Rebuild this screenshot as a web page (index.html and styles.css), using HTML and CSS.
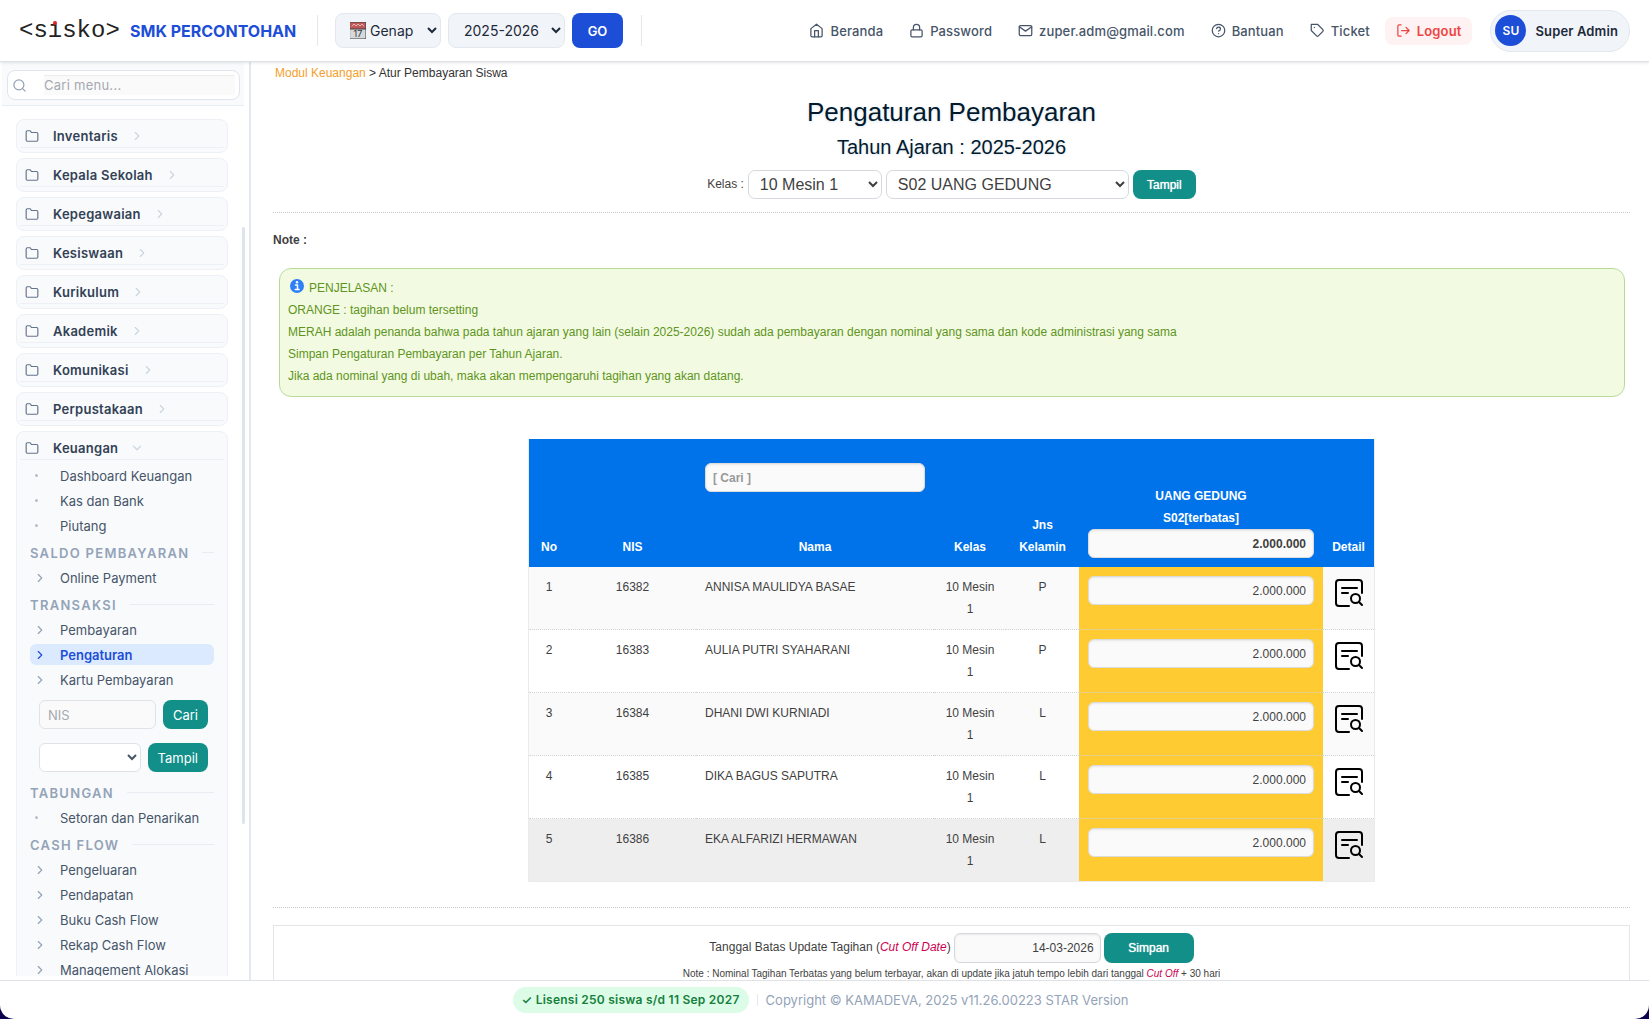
FILE: index.html
```html
<!DOCTYPE html>
<html lang="id">
<head>
<meta charset="utf-8">
<title>Pengaturan Pembayaran - SISKO</title>
<link rel="stylesheet" href="styles.css">
</head>
<body>
<svg class="defs" aria-hidden="true">
  <symbol id="folder" viewBox="0 0 24 24"><path d="M22 19a2 2 0 0 1-2 2H4a2 2 0 0 1-2-2V5a2 2 0 0 1 2-2h5l2 3h9a2 2 0 0 1 2 2z"/></symbol>
  <symbol id="chevron" viewBox="0 0 24 24"><path d="M9 18l6-6-6-6"/></symbol>
  <symbol id="detail" viewBox="0 0 28 28"><path d="M14 27H4a3 3 0 0 1-3-3V4a3 3 0 0 1 3-3h20a3 3 0 0 1 3 3v10M7 9h15M7 14h6M24 23l3 3"/><circle cx="20.500" cy="19.500" r="4.500"/></symbol>
</svg>

<header class="topbar">
  <a class="brand" href="#"><span class="logo">&lt;s<span class="logo-i">ı<i class="logo-dot"></i></span>sko&gt;</span><span class="school">SMK PERCONTOHAN</span></a>
  <form class="period">
    <span class="semester">
      <select aria-label="Semester" class="top-select sem-select"><option>Genap</option></select>
      <svg class="calendar" viewBox="0 0 16 17" aria-hidden="true"><rect width="16" height="17" fill="#d6d9dc"/><rect width="16" height="7" fill="#bd5a58"/><path d="M2 4l2-2 2 2 2-2 2 2 2-2 2 2" stroke="#e8b4b2" fill="none"/><text x="8" y="15" text-anchor="middle" class="cal-day">17</text></svg>
    </span>
    <select aria-label="Tahun ajaran" class="top-select year-select"><option>2025-2026</option></select>
    <button type="button" class="go">GO</button>
  </form>
  <nav class="topnav">
    <a href="#"><svg class="ico" viewBox="0 0 24 24"><path d="M3 9l9-7 9 7v11a2 2 0 0 1-2 2H5a2 2 0 0 1-2-2z"/><path d="M9 22V12h6v10"/></svg>Beranda</a>
    <a href="#"><svg class="ico" viewBox="0 0 24 24"><rect x="3" y="11" width="18" height="11" rx="2"/><path d="M7 11V7a5 5 0 0 1 10 0v4"/></svg>Password</a>
    <a href="#"><svg class="ico" viewBox="0 0 24 24"><rect x="2" y="4" width="20" height="16" rx="2"/><path d="M22 6l-10 7L2 6"/></svg>zuper.adm@gmail.com</a>
    <a href="#"><svg class="ico" viewBox="0 0 24 24"><circle cx="12" cy="12" r="10"/><path d="M9 9a3 3 0 0 1 6 1c0 2-3 3-3 3M12 17h.01"/></svg>Bantuan</a>
    <a href="#"><svg class="ico" viewBox="0 0 24 24"><path d="M20.600 13.400l-7.200 7.200a2 2 0 0 1-2.800 0L2 12V2h10l8.600 8.600a2 2 0 0 1 0 2.800zM7 7h.01"/></svg>Ticket</a>
    <a href="#" class="logout"><svg class="ico" viewBox="0 0 24 24"><path d="M8 21H5a2 2 0 0 1-2-2V5a2 2 0 0 1 2-2h3M16 17l5-5-5-5M21 12H9"/></svg>Logout</a>
    <a href="#" class="user"><span class="avatar">SU</span>Super Admin</a>
  </nav>
</header>

<div class="body">
  <aside class="sidebar">
    <div class="search-area">
      <div class="search"><svg class="ico" viewBox="0 0 24 24"><circle cx="11" cy="11" r="8"/><path d="M21 21l-4-4"/></svg><input aria-label="Cari menu" type="text" placeholder="Cari menu..."></div>
    </div>
    <div class="menu">
      <section class="card"><button type="button" class="card-head"><svg class="fold"><use href="#folder"/></svg>Inventaris<svg class="chev"><use href="#chevron"/></svg></button></section>
      <section class="card"><button type="button" class="card-head"><svg class="fold"><use href="#folder"/></svg>Kepala Sekolah<svg class="chev"><use href="#chevron"/></svg></button></section>
      <section class="card"><button type="button" class="card-head"><svg class="fold"><use href="#folder"/></svg>Kepegawaian<svg class="chev"><use href="#chevron"/></svg></button></section>
      <section class="card"><button type="button" class="card-head"><svg class="fold"><use href="#folder"/></svg>Kesiswaan<svg class="chev"><use href="#chevron"/></svg></button></section>
      <section class="card"><button type="button" class="card-head"><svg class="fold"><use href="#folder"/></svg>Kurikulum<svg class="chev"><use href="#chevron"/></svg></button></section>
      <section class="card"><button type="button" class="card-head"><svg class="fold"><use href="#folder"/></svg>Akademik<svg class="chev"><use href="#chevron"/></svg></button></section>
      <section class="card"><button type="button" class="card-head"><svg class="fold"><use href="#folder"/></svg>Komunikasi<svg class="chev"><use href="#chevron"/></svg></button></section>
      <section class="card"><button type="button" class="card-head"><svg class="fold"><use href="#folder"/></svg>Perpustakaan<svg class="chev"><use href="#chevron"/></svg></button></section>
      <section class="card open"><button type="button" class="card-head"><svg class="fold"><use href="#folder"/></svg>Keuangan<svg class="chev"><use href="#chevron"/></svg></button>
        <div class="submenu">
          <a href="#" class="dot">Dashboard Keuangan</a>
          <a href="#" class="dot">Kas dan Bank</a>
          <a href="#" class="dot">Piutang</a>
          <h3>SALDO PEMBAYARAN</h3>
          <a href="#"><svg><use href="#chevron"/></svg>Online Payment</a>
          <h3>TRANSAKSI</h3>
          <a href="#"><svg><use href="#chevron"/></svg>Pembayaran</a>
          <a href="#" class="active"><svg><use href="#chevron"/></svg>Pengaturan</a>
          <a href="#"><svg><use href="#chevron"/></svg>Kartu Pembayaran</a>
          <div class="quick">
            <form class="mini"><input type="text" aria-label="NIS" placeholder="NIS"><button type="button" class="teal">Cari</button></form>
            <form class="mini"><select aria-label="Kelas"><option></option></select><button type="button" class="teal">Tampil</button></form>
          </div>
          <h3>TABUNGAN</h3>
          <a href="#" class="dot">Setoran dan Penarikan</a>
          <h3>CASH FLOW</h3>
          <a href="#"><svg><use href="#chevron"/></svg>Pengeluaran</a>
          <a href="#"><svg><use href="#chevron"/></svg>Pendapatan</a>
          <a href="#"><svg><use href="#chevron"/></svg>Buku Cash Flow</a>
          <a href="#"><svg><use href="#chevron"/></svg>Rekap Cash Flow</a>
          <a href="#"><svg><use href="#chevron"/></svg>Management Alokasi</a>
        </div>
      </section>
    </div>
    <div class="thumb"></div>
  </aside>

  <main class="main">
    <div class="crumbs"><a href="#">Modul Keuangan</a> &gt; Atur Pembayaran Siswa</div>
    <h1>Pengaturan Pembayaran</h1>
    <h2>Tahun Ajaran : 2025-2026</h2>
    <form class="filter">
      <label for="kelas">Kelas :</label>
      <select id="kelas" class="kelas"><option>10 Mesin 1</option></select>
      <select aria-label="Jenis pembayaran" class="jenis"><option>S02 UANG GEDUNG</option></select>
      <button type="button" class="teal">Tampil</button>
    </form>
    <hr>
    <p class="note-title">Note :</p>
    <div class="info">
      <p><svg class="info-ico" viewBox="0 0 14 14" aria-hidden="true"><circle cx="7" cy="7" r="7" fill="#2f80f5"/><path d="M5.500 6H7.500v4.500M5.300 10.500h3.800" stroke="#fff" stroke-width="1.500" fill="none"/><circle cx="7" cy="3.300" r="1.200" fill="#fff"/></svg>PENJELASAN :</p>
      <p>ORANGE : tagihan belum tersetting</p>
      <p>MERAH adalah penanda bahwa pada tahun ajaran yang lain (selain 2025-2026) sudah ada pembayaran dengan nominal yang sama dan kode administrasi yang sama</p>
      <p>Simpan Pengaturan Pembayaran per Tahun Ajaran.</p>
      <p>Jika ada nominal yang di ubah, maka akan mempengaruhi tagihan yang akan datang.</p>
    </div>
    <table class="bills">
      <colgroup><col class="c-no"><col class="c-nis"><col class="c-nama"><col class="c-kelas"><col class="c-jk"><col class="c-uang"><col class="c-detail"></colgroup>
      <thead><tr>
        <th>No</th><th>NIS</th>
        <th><input class="cari" type="text" aria-label="Cari nama" placeholder="[ Cari ]">Nama</th>
        <th>Kelas</th><th>Jns Kelamin</th>
        <th>UANG GEDUNG<br>S02[terbatas]<input type="text" aria-label="Nominal semua" value="2.000.000"></th>
        <th>Detail</th>
      </tr></thead>
      <tbody>
        <tr><td>1</td><td>16382</td><td class="name">ANNISA MAULIDYA BASAE</td><td>10 Mesin 1</td><td>P</td><td class="amount"><input type="text" aria-label="Nominal 16382" value="2.000.000"></td><td class="act"><a href="#" aria-label="Detail 16382"><svg><use href="#detail"/></svg></a></td></tr>
        <tr><td>2</td><td>16383</td><td class="name">AULIA PUTRI SYAHARANI</td><td>10 Mesin 1</td><td>P</td><td class="amount"><input type="text" aria-label="Nominal 16383" value="2.000.000"></td><td class="act"><a href="#" aria-label="Detail 16383"><svg><use href="#detail"/></svg></a></td></tr>
        <tr><td>3</td><td>16384</td><td class="name">DHANI DWI KURNIADI</td><td>10 Mesin 1</td><td>L</td><td class="amount"><input type="text" aria-label="Nominal 16384" value="2.000.000"></td><td class="act"><a href="#" aria-label="Detail 16384"><svg><use href="#detail"/></svg></a></td></tr>
        <tr><td>4</td><td>16385</td><td class="name">DIKA BAGUS SAPUTRA</td><td>10 Mesin 1</td><td>L</td><td class="amount"><input type="text" aria-label="Nominal 16385" value="2.000.000"></td><td class="act"><a href="#" aria-label="Detail 16385"><svg><use href="#detail"/></svg></a></td></tr>
        <tr class="hover"><td>5</td><td>16386</td><td class="name">EKA ALFARIZI HERMAWAN</td><td>10 Mesin 1</td><td>L</td><td class="amount"><input type="text" aria-label="Nominal 16386" value="2.000.000"></td><td class="act"><a href="#" aria-label="Detail 16386"><svg><use href="#detail"/></svg></a></td></tr>
      </tbody>
    </table>
    <hr>
    <form class="cutoff">
      <div class="cutoff-row"><label for="cutoff">Tanggal Batas Update Tagihan (<em>Cut Off Date</em>)</label><input id="cutoff" type="text" value="14-03-2026"><button type="button" class="teal">Simpan</button></div>
      <p>Note : Nominal Tagihan Terbatas yang belum terbayar, akan di update jika jatuh tempo lebih dari tanggal <em>Cut Off</em> + 30 hari</p>
    </form>
  </main>
</div>

<footer class="footer">
  <span class="license">✓ Lisensi 250 siswa s/d 11 Sep 2027</span>
  <span class="copy">Copyright © KAMADEVA, 2025 v11.26.00223 STAR Version</span>
</footer>
</body>
</html>
```
FILE: styles.css
```css
* { box-sizing: border-box; }
html { background: #0b0350; }
body {
  margin: 0;
  height: 100vh;
  display: flex;
  flex-direction: column;
  overflow: hidden;
  background: #fff;
  border-radius: 0 0 14px 14px;
  font-family: "Liberation Sans", Arial, sans-serif;
  font-size: 12px;
  line-height: 22px;
  color: #3f3f3f;
}
.defs { position: absolute; width: 0; height: 0; }
a { color: inherit; text-decoration: none; }
button, input, select { font: inherit; color: inherit; margin: 0; }
svg { fill: none; stroke: currentColor; stroke-width: 2; stroke-linecap: round; stroke-linejoin: round; flex: none; }
h1, h2, h3, p { margin: 0; }

/* top bar */
.topbar {
  flex: none;
  height: 62px;
  display: flex;
  align-items: center;
  padding: 0 19px;
  border-bottom: 1px solid #dde1e6;
  box-shadow: 0 1px 3px #0000001a;
  z-index: 2;
  font-family: Inter, sans-serif;
}
.brand { display: flex; align-items: center; }
.logo { font: 24px "Liberation Mono", monospace; color: #222; width: 111px; white-space: nowrap; }
.logo-i { position: relative; }
.logo-dot { position: absolute; left: 5px; top: 4px; width: 4px; height: 4px; border-radius: 2px; background: #e02020; }
.school { min-width: 169px; font-size: 16px; font-weight: 700; color: #1d4ed8; white-space: nowrap; }
.period {
  display: flex;
  align-items: center;
  gap: 7px;
  margin-left: 18px;
  padding: 0 18px 0 17px;
  border: solid #e2e8f0;
  border-width: 0 1px;
  height: 31px;
}
.semester { position: relative; }
.top-select { height: 35px; border: 1px solid #e2e8f0; border-radius: 8px; background: #f1f5f9; color: #1e293b; font-size: 14px; display: block; }
.sem-select { width: 106px; padding-left: 30px; }
.year-select { width: 117px; padding-left: 11px; }
.calendar { position: absolute; left: 15px; top: 9px; width: 16px; height: 17px; stroke-width: 1; pointer-events: none; }
.cal-day { font: 9px Inter, sans-serif; fill: #333; stroke: none; }
.go { width: 51px; height: 35px; border: 0; border-radius: 8px; background: #1d4ed8; color: #fff; font-size: 13px; font-weight: 600; padding: 0; }
.topnav { margin-left: auto; display: flex; align-items: center; font-size: 13px; font-weight: 500; color: #475569; letter-spacing: 0.01em; }
.topnav a { display: flex; align-items: center; gap: 6px; padding: 0 11px; height: 28px; margin-left: 4px; white-space: nowrap; }
.ico { width: 15px; height: 15px; }
.topnav .logout { background: #fef2f2; color: #ef4444; border-radius: 8px; font-weight: 600; }
.topnav .user { height: 42px; margin-left: 18px; padding: 0 11px 0 4px; gap: 9px; border: 1px solid #e2e8f0; border-radius: 21px; background: #f1f5f9; color: #1e293b; font-weight: 600; }
.avatar { width: 31px; height: 31px; border-radius: 50%; background: #1d4ed8; color: #fff; display: flex; align-items: center; justify-content: center; font-size: 12px; }

.body { flex: 1; min-height: 0; display: flex; }

/* sidebar */
.sidebar {
  position: relative;
  width: 251px;
  flex: none;
  border-right: 2px solid #e2e8f0;
  display: flex;
  flex-direction: column;
  padding-bottom: 4px;
  overflow: hidden;
  font-family: Inter, sans-serif;
  font-size: 13px;
}
.search-area { margin: 0 5px 0 2px; padding: 8px 4px 5px 5px; background: #f8fafc; border-bottom: 1px solid #e8edf3; }
.search { display: flex; align-items: center; height: 30px; gap: 17px; padding: 0 4px; border: 1px solid #dfe5ec; border-radius: 8px; background: #fff; color: #94a3b8; }
.search input { width: 0; flex: 1; height: 20px; padding: 0; border: 0; background: #fafafa; box-shadow: inset 0 1px 1px #0000000f; letter-spacing: 0.02em; }
input::placeholder { color: #a5a9b0; opacity: 1; }
.menu { flex: 1; min-height: 0; overflow: hidden; padding: 13px 21px 0 16px; }
.card { margin-bottom: 5px; border: 1px solid #edf1f6; border-radius: 8px; background: #f8fafc; padding: 0 3px 4px; }
.card-head { width: 100%; height: 28px; display: flex; align-items: center; padding: 4px 0 0 5px; border: 0; border-bottom: 1px solid #edf1f6; background: none; color: #334155; font-weight: 600; white-space: nowrap; letter-spacing: 0.02em; }
.fold { width: 14px; height: 14px; margin-right: 14px; color: #64748b; }
.chev { width: 14px; height: 14px; margin-left: 12px; color: #cbd5e1; }
.open .chev { transform: rotate(90deg); }
.submenu { padding: 3px 10px; color: #475569; }
.submenu a { display: flex; align-items: center; height: 21px; margin: 2px 0 4px; padding-left: 4px; border-radius: 6px; white-space: nowrap; }
.submenu a svg { width: 14px; height: 14px; margin: 0 13px 0 -1px; color: #94a3b8; }
.submenu .dot::before { content: ""; width: 3px; height: 3px; margin: 0 22px 0 1px; border-radius: 50%; background: #b4bfcc; }
.submenu .active { background: #dbeafe; color: #1d4ed8; font-weight: 600; }
.submenu .active svg { color: #1d4ed8; }
.submenu h3 { display: flex; align-items: center; gap: 13px; height: 25px; font-size: 13px; font-weight: 600; letter-spacing: 0.1em; color: #94a3b8; white-space: nowrap; }
.submenu h3::after { content: ""; flex: 1; height: 1px; background: #e8edf3; }
.quick { display: flex; flex-direction: column; gap: 14px; margin: 10px 6px 8px 9px; }
.mini { display: flex; gap: 7px; }
.mini input, .mini select { flex: 1; width: 0; height: 29px; padding: 0 8px; border: 1px solid #dfe3e8; border-radius: 6px; background: #fafafa; }
.mini select { background: #fff; }
.mini .teal { height: 29px; padding: 0 10px; }
.thumb { position: absolute; right: 4px; top: 165px; width: 3px; height: 65%; background: #dde4ed; border-radius: 2px; }

.teal { border: 0; border-radius: 8px; background: #128f89; color: #fff; }

/* page */
.main { flex: 1; min-width: 0; overflow: hidden; padding: 0 19px 0 22px; }
.crumbs { padding-left: 2px; line-height: 22px; color: #333; }
.crumbs a { color: #f59e2b; }
h1, h2 { text-align: center; font-weight: 400; color: #021a2e; text-shadow: 0 1px 3px #0f4c8126; }
h1 { margin-top: 10px; font-size: 26px; line-height: 36px; }
h2 { font-size: 20px; line-height: 34px; }
.filter { display: flex; justify-content: center; gap: 4px; margin: 6px 0 13px; line-height: 28px; }
.filter select { height: 29px; border: 1px solid #d5d9dd; border-radius: 7px; background: #fff; padding: 0 7px; font-size: 16px; line-height: 20px; }
.kelas { width: 134px; }
.jenis { width: 243px; }
.filter .teal { width: 63px; height: 29px; padding: 0; line-height: 20px; text-shadow: 0 0 1px #fff; }
hr { margin: 0; border: 0; border-top: 1px dotted #c8c8c8; }
.note-title { margin-top: 16px; font-weight: 700; }
.info { margin: 17px 5px 0 6px; padding: 8px 8px 9px; border: 1px solid #bcd99c; border-radius: 12px; background: #f2fbe2; color: #5f9421; }
.info-ico { width: 14px; height: 14px; margin: 0 5px 0 2px; stroke: none; vertical-align: -1px; }

.bills { width: 847px; margin: 42px auto 25px; border-collapse: separate; border-spacing: 0; table-layout: fixed; border: solid #ebebeb; border-width: 0 1px 1px; text-align: center; }
.c-no { width: 40px; } .c-nis { width: 127px; } .c-nama { width: 238px; } .c-kelas { width: 72px; } .c-jk { width: 73px; } .c-uang { width: 244px; }
.bills th { height: 128px; padding: 9px; background: #0073ea; color: #fff; vertical-align: bottom; }
.bills td { height: 63px; padding: 9px; border-bottom: 1px dotted #d4d4d4; vertical-align: top; }
.bills tr:last-child td { border-bottom: 0; height: 62px; }
.bills th:last-child, .bills th:first-child { padding: 9px 0; }
.bills input { display: block; width: 100%; height: 29px; padding: 0 7px; border: 1px solid #dcdcdc; border-radius: 6px; background: #fafafa; color: #3f3f3f; text-align: right; box-shadow: inset 0 1px 2px #00000014; }
.bills .cari { text-align: left; margin-bottom: 44px; }
.bills .cari::placeholder { color: #999; }
.bills tbody tr:nth-child(odd) { background: #fafafa; }
.bills tbody tr.hover { background: #eee; }
.bills .name { text-align: left; }
.bills .amount { background: #ffcb33; }
.bills .act { padding: 12px 0 0; line-height: 0; color: #000; }
.act svg { width: 28px; height: 28px; }

.cutoff { margin-top: 17px; border: 1px solid #e5e5e5; padding: 7px 0 20px; text-align: center; }
.cutoff-row { display: flex; justify-content: center; gap: 3px; line-height: 28px; }
.cutoff input { width: 147px; height: 30px; padding: 0 6px; border: 1px solid #d5d9dd; border-radius: 6px; background: #fafafa; text-align: right; box-shadow: inset 0 1px 2px #00000014; }
.cutoff .teal { width: 90px; height: 30px; text-shadow: 0 0 1px #fff; }
.cutoff p { font-size: 10px; line-height: 22px; }
em { color: #cc0052; }

.footer { flex: none; height: 39px; display: flex; align-items: center; justify-content: center; gap: 8px; padding-right: 8px; border-top: 1px solid #dfe3e8; font-family: Inter, sans-serif; }
.license { height: 26px; padding: 0 9px; border-radius: 13px; background: #dcfce7; color: #15803d; font-weight: 600; line-height: 26px; letter-spacing: 0.02em; }
.copy { padding-left: 8px; border-left: 1px solid #e2e8f0; line-height: 12px; font-size: 13px; color: #94a3b8; }
```
